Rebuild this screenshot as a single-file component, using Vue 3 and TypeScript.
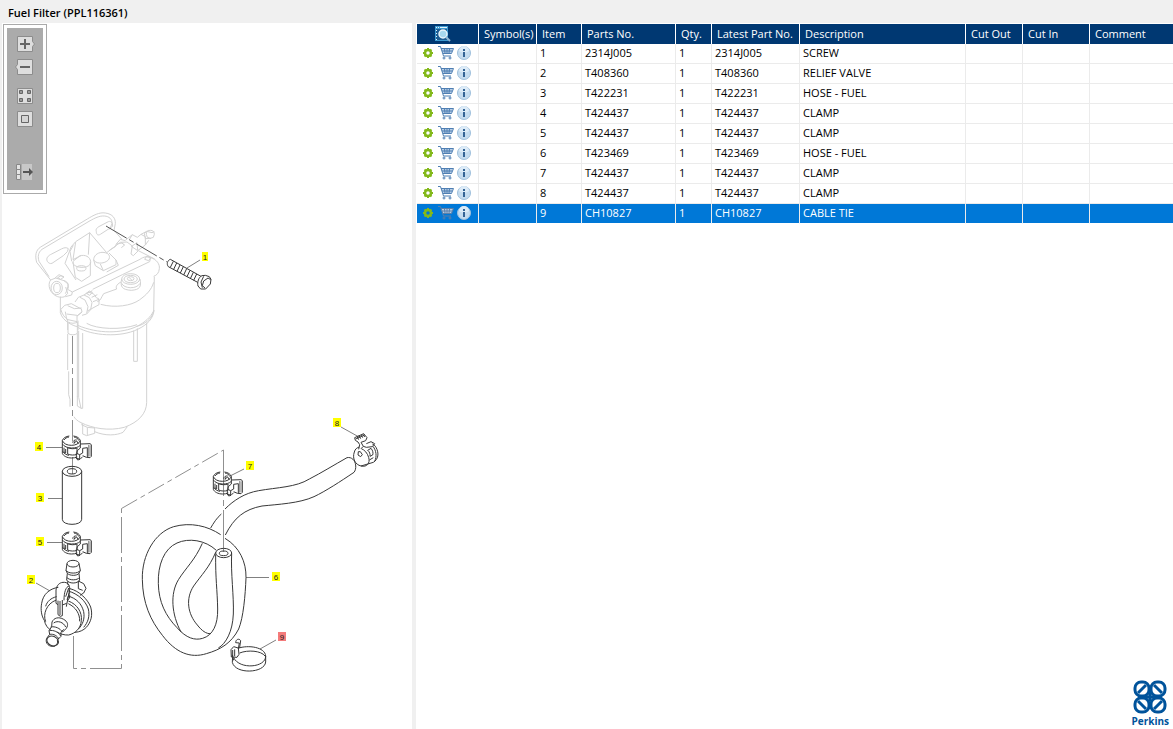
<script setup lang="ts">
import { ref } from 'vue'

interface Part {
  item: number
  partNo: string
  qty: number
  latest: string
  description: string
}

interface Callout {
  item: number
  x: number
  y: number
}

const parts: Part[] = [
  { item: 1, partNo: '2314J005', qty: 1, latest: '2314J005', description: 'SCREW' },
  { item: 2, partNo: 'T408360', qty: 1, latest: 'T408360', description: 'RELIEF VALVE' },
  { item: 3, partNo: 'T422231', qty: 1, latest: 'T422231', description: 'HOSE - FUEL' },
  { item: 4, partNo: 'T424437', qty: 1, latest: 'T424437', description: 'CLAMP' },
  { item: 5, partNo: 'T424437', qty: 1, latest: 'T424437', description: 'CLAMP' },
  { item: 6, partNo: 'T423469', qty: 1, latest: 'T423469', description: 'HOSE - FUEL' },
  { item: 7, partNo: 'T424437', qty: 1, latest: 'T424437', description: 'CLAMP' },
  { item: 8, partNo: 'T424437', qty: 1, latest: 'T424437', description: 'CLAMP' },
  { item: 9, partNo: 'CH10827', qty: 1, latest: 'CH10827', description: 'CABLE TIE' },
]

const callouts: Callout[] = [
  { item: 1, x: 202, y: 252 },
  { item: 2, x: 27, y: 575 },
  { item: 3, x: 36, y: 493 },
  { item: 4, x: 35, y: 442 },
  { item: 5, x: 36, y: 537 },
  { item: 6, x: 272, y: 572 },
  { item: 7, x: 246, y: 461 },
  { item: 8, x: 333, y: 418 },
  { item: 9, x: 278, y: 632 },
]

const headings = ['Symbol(s)', 'Item', 'Parts No.', 'Qty.', 'Latest Part No.', 'Description', 'Cut Out', 'Cut In', 'Comment']
const selected = ref(9)
</script>

<template>
  <div class="app">
    <h1 class="title">Fuel Filter (PPL116361)</h1>
    <main class="panes">
      <section class="drawing" aria-label="Drawing">
        <div class="toolbar" role="toolbar" aria-label="Zoom">
          <div class="tools">
            <button class="tool" type="button" aria-label="Zoom in">
              <svg viewBox="0 0 18 16"><path class="key" d="M.5.5h15v5l2 2.5-2 2.5v5H.5z" /><path class="mark" d="M8 3v10M3 8h10" /></svg>
            </button>
            <button class="tool" type="button" aria-label="Zoom out">
              <svg viewBox="0 0 18 16"><path class="key" d="M.5.5h15v15H.5v-5L-1.5 8l2-2.500z" /><path class="mark" d="M3 8h10" /></svg>
            </button>
            <button class="tool tool-gap" type="button" aria-label="Fit page">
              <svg viewBox="0 0 18 16">
                <path class="key" d="M.5.5h15v15H.5z" />
                <path class="box" d="M2.500 2.500h3v3h-3zM10.500 2.500h3v3h-3zM2.500 10.500h3v3h-3zM10.500 10.500h3v3h-3z" />
              </svg>
            </button>
            <button class="tool" type="button" aria-label="Actual size">
              <svg viewBox="0 0 18 16"><path class="key" d="M.5.5h15v15H.5z" /><path class="frame" d="M4.500 4.500h7v7h-7z" /></svg>
            </button>
            <button class="tool tool-last" type="button" aria-label="Hide list">
              <svg viewBox="0 0 18 16">
                <path class="panel" d="M5 0h10v16H5z" />
                <path class="cells" d="M-.5.5h4v5h-4zM-.5 5.500h4v5h-4zM-.5 10.500h4v5h-4z" />
                <path class="arrow" d="M6 7h6V4l4 4-4 4V9H6z" />
              </svg>
            </button>
          </div>
        </div>

        <svg class="diagram" viewBox="2 194 410 535" role="img" aria-label="Fuel filter exploded view">
          <defs>
            <symbol id="clamp" viewBox="0 0 90 78" overflow="visible">
              <path d="M1 14C3 6 12 1 22 0M34 0C44 1 53 6 55 14M1 14v38c3 8 14 14 28 14 6 0 12-1 17-3" />
              <path d="M1 14c4 9 14 14 27 14s23-5 27-14v10M1 24c5 7 15 12 28 12 11 0 20-2 26-8M6 12c3-5 8-8 15-9M36 3c7 1 12 5 15 11" />
              <path d="M17 35v19c8 4 20 4 28 1V36c-8 3-20 3-28-1M6 35v13l5 3V39M2 46c4 7 12 11 19 12" />
              <path d="M32 20c1-6 6-9 12-8M36 21l8-6 5 8M38 16l-2 7M55 24l30-1 3 4v34l-4 4-11-1-11-5" />
              <path d="M55 24v12l-9 8-2 8 9 4 9-5V37l14-2v28M53 56v13l-10-2V52M43 66l4 6 7-2 8-8" />
              <path class="tone" d="M80 27v35M84 28v33" />
            </symbol>
          </defs>

          <!-- filter head -->
          <svg class="ghost" x="20" y="200" width="200" height="130" viewBox="0 0 600 390">
            <path d="M92 240L50 187c-5-18-4-36 12-46L202 57c18-11 36-21 54-18 22 3 31 16 30 32l-4 20 23 26" />
            <path d="M87 230L57 184c-4-13-3-27 9-36L207 64c18-10 31-17 46-16 15 1 24 10 23 23l-7 17" />
            <path d="M82 184c-5-9 2-17 13-22l29-15c8-4 15-6 21-1l-3 9-12 12-34 23c-6 2-11-1-14-6zM229 95c-3-8 3-13 11-17l25-13c5-2 9 0 12 5l1 9-37 24c-7 4-12 1-12-8z" />
            <path d="M135 190l18-49 14-16 42-27 51 60M135 190l33 50M155 184l-5-30 10-18M167 126l-8 53 25-13M209 98l-4 66" />
            <path d="M159 184c-3 10 9 17 24 18 18 1 30-6 29-17-1-14-17-23-33-17zM159 186l7 46 19 12 26-17v-42" />
            <ellipse cx="184" cy="205" rx="14" ry="8" />
            <path d="M221 180c0-12 10-22 25-23 17 0 26 8 21 20-6 12-36 19-46 3zM221 180l5 17 24 15 38-18v-14l-21-21M250 212l-9-20M288 180l7 16-35 20" />
            <path d="M92 240c-8 10-5 28 4 38 9 11 24 17 38 12l9-10-6-19M92 240l15-6 25 8 12 10c0 10-3 20-8 29M105 234l12-10 15 7" />
            <ellipse cx="110" cy="264" rx="17" ry="20" /><ellipse cx="111" cy="264" rx="10" ry="14" />
            <path d="M113 233l10-6 9 4-10 7zM132 242c15 4 15 17 11 26l14 8 203-98c8-7 28-12 32-5l-3 12-82 39-89 44M157 276l-2 9-19 5M392 173c18 5 28 20 26 33-1 13-8 20-17 23M374 178l5-8 13 3-6 9z" />
            <path d="M260 158l41-31 20-1 16 12-4 24 7 5 15-15 49 25M289 132l12-14 15 4M269 150l17-10 3-8 17-3 8 6-10 8M305 128l6 6M316 121l21-17 15 8 11-9 13 7v25l-23 17-19-13M335 139l16-11 2 22M337 104l-9 15M363 103l17-9 16 4 7-3M376 135l10-14" />
            <ellipse cx="391" cy="103" rx="12" ry="12" /><path d="M386 91l-13 9 3 16 17-1" />
            <ellipse cx="332" cy="237" rx="27" ry="16" /><ellipse cx="332" cy="237" rx="20" ry="11" /><ellipse cx="332" cy="236" rx="10" ry="6" />
            <path d="M305 237c-5 24 1 32 29 34 25-2 31-10 26-34M305 250c6 16 45 19 55 0M327 232l8 8M303 246c-8 4-18 12-13 21l-39 14c-8 12-9 22-19 24M242 313c44 12 92 4 116-13 22-16 36-30 43-53" />
            <path d="M121 290v48c7 27 42 41 52 42M403 230l-2 106c-8 22-25 36-50 43" />
            <path d="M121 330l13-14 20-5 30 16 2 9-15 12v17l-31-7-4-23M140 342l31 4M171 348l15-12M143 317l20 9 22-2M165 306l10-14 17-7 16 8 8 14-4 22-12 13-14 4M180 292l15 8 9 20-4 20M192 285l13-9 15 5 9 12 8 4v17l-35 19M197 282l20-10M215 292l17-8M219 305l18-7M199 280l9-7 9 4-8 9z" />
            <path d="M143 358v32M174 362v28M200 370c30 18 105 21 151 4" />
          </svg>

          <!-- filter bowl -->
          <svg class="ghost" x="20" y="310" width="200" height="150" viewBox="0 0 600 450">
            <path d="M123 0c3 13 12 24 20 28M173 52c44 26 128 31 180 6 29-14 47-32 49-58M173 46c61 26 132 25 178 3 24-12 41-28 49-45" />
            <path d="M144 36v34c7 6 22 6 28 0V36M146 36c5 5 20 5 26 0M143 72v108M146 184v70l4 14v22M380 38v240c-1 32-23 58-67 74-47 12-96 3-130-14-11-5-18-12-21-18M172 70v190M176 62v200l7 33h5V69M172 258v30l12 7M341 62v92h11V55" />
            <path d="M188 343v29l12 5 24-7V354M184 344l18 8 22 2M202 352v24M224 365c33 14 67 11 85 2l13-17M186 340l2 6" />
          </svg>

          <!-- centre and assembly lines -->
          <g class="axis">
            <path stroke-dasharray="28 4 6 4" d="M72.500 336V441M72.500 457V474" />
            <path stroke-dasharray="36 4 5 4" d="M73.500 636V668.500H121.500V508.500" />
            <path stroke-dasharray="18 4 5 4" d="M121.500 508.500L223.500 450" />
            <path stroke-dasharray="46 4 6 4" d="M223.500 450V552" />
          </g>
          <path class="screw-axis" stroke-dasharray="24 3 5 3" d="M106 226L167 262" />
          <path class="leader" d="M187 268L200 260M36 583L50 591M48 498.500H62M46 447.500H62M47 542.500H62M246 577.500H269M230 476L244 469M341 427L359 437M260 649L276 640" />

          <!-- screw -->
          <svg class="ink" x="20" y="200" width="200" height="130" viewBox="0 0 600 390">
            <path d="M451 178c-9 3-12 15-6 22l88 47M451 178l92 51M460 184l-9 18M470 189l-9 19M480 195l-9 19M490 200l-9 19M500 206l-9 19M510 211l-9 19M520 217l-9 19M530 222l-9 19" />
            <path d="M546 227c-10 4-15 20-12 31l8 9h15l14-15 2-14-5-8-12-4zM551 229l-8 17 4 17M551 243l13-9 8 5M551 243l-4 14 8 7" />
          </svg>

          <!-- hose 3 -->
          <svg class="ink" x="20" y="430" width="110" height="130" viewBox="0 0 330 390">
            <ellipse cx="156" cy="124" rx="29" ry="15" /><ellipse cx="156" cy="124" rx="14" ry="8" />
            <path d="M127 124v144c0 20 58 20 58 0V124" />
          </svg>

          <use class="ink" href="#clamp" x="62" y="436" width="30" height="26" />
          <use class="ink" href="#clamp" x="62" y="532" width="30" height="26" />
          <use class="ink" href="#clamp" x="213" y="472" width="30" height="26" />

          <!-- relief valve -->
          <svg class="ink" x="20" y="550" width="130" height="130" viewBox="0 0 390 390">
            <ellipse cx="159" cy="41" rx="18" ry="10" />
            <path d="M141 41l-3 20 4 9-2 20c6 12 33 12 39 0l-2-20 4-9-4-20M138 61c6 11 37 11 43 0M140 82c8 10 32 10 39 0M142 70c7 8 29 8 35 0M143 94v10M175 93l16 8 7 14-7 14-11 7M175 93v23l13 5" />
            <path d="M115 112c-27 4-46 21-50 48-4 20 0 39 8 51M150 116c28 7 53 32 62 55 7 25 1 45-13 61-9 9-20 14-34 15M145 123c29 9 51 28 60 54 5 22-1 40-14 55" />
            <path d="M77 215c-9-22 2-54 32-65M145 153c27 10 42 34 39 59-2 24-18 38-38 43-14 1-27-4-35-9M73 211c3 14 10 24 19 29M110 140c-17 4-29 14-33 29M144 138c25 7 41 23 47 47 4 21-3 40-16 52M145 161c23 11 35 31 34 53" />
            <path d="M108 160v-40c2-13 9-22 21-23 14-1 21 7 20 22l-8 40-2 11M132 151c0-25 6-41 15-43M137 140l9-26 3 13-8 22M114 152v42l7 5 6-2v-47M120 153v42M108 160l6 4M127 165l13-5M141 151c6 0 9-10 8-17" />
            <path d="M96 216c5-12 20-17 35-8 12 7 15 16 8 27l-12 12M96 216l-1 14-8 12 2 11-9 12c-6 15 8 28 25 23l8-9-1-9 11-11v-12l8-9M92 231c13-3 29 4 35 15M88 242c12-3 28 4 34 16M89 253c12-2 24 5 27 14M101 219c12-9 30-2 36 12" />
            <ellipse cx="98" cy="273" rx="18" ry="14" transform="rotate(25 98 273)" />
          </svg>

          <!-- hose 6 and cable tie -->
          <svg class="ink" x="130" y="500" width="170" height="190" viewBox="0 0 510 570">
            <path d="M272 104C232 77 181 66 131 80 75 97 35 165 37 238c1 71 24 123 61 169 39 51 83 69 131 54 42-12 75-31 97-74 14-34 20-101 22-154 1-46-19-92-63-118" />
            <path d="M259 151C226 120 176 113 141 129c-39 17-58 66-56 122 1 55 22 97 56 132 28 32 54 39 77 32 31-9 46-42 45-88-1-57-7-92-6-164M217 130c-22 50-49 73-71 108-27 43-21 106 7 158M257 157c-20 47-42 67-66 101-25 38-18 84 11 117 13 17 27 27 40 26M305 160c-3 61 7 128 5 182-2 52-22 89-45 102" />
            <ellipse cx="281" cy="159" rx="24" ry="14" /><ellipse cx="281" cy="160" rx="13" ry="7" />
            <path d="M324 445c30-11 81-4 83 23 1 35-78 42-96 5M407 468v18c-3 34-91 38-100 1l1-21M329 459c24-10 65-7 76 9" />
            <path d="M303 449l8-9 14 4 2 19-6 9-17-1zM308 450v19M314 448v21M317 428c0-10 10-14 15-6l-3 20-4 4M325 446l3-17-11-1M307 465l4 16" />
          </svg>

          <!-- upper hose and clamp 8 -->
          <svg class="ink" x="200" y="410" width="200" height="120" viewBox="0 0 600 360">
            <path d="M441 143c-39 22-76 45-113 64-40 25-96 25-152 35-42 7-75 29-101 55M64 312c-14 12-24 28-32 42M76 375c26-52 57-77 110-87 48-5 112-8 156-28 34-16 80-46 120-73" />
            <path d="M441 143c14-3 24 8 26 22 1 10-1 17-5 22" />
            <path d="M463 126c-7 20 3 38 20 42 18 4 28-8 23-26-4-13-12-22-22-26M463 126c2-9 8-13 15-15M483 168l37-11c15-9 18-27 8-45-3-5-7-9-11-10M519 109c10 13 12 30 5 45M503 121l10-6c6 7 7 14 5 20l-8 4c1-7-1-13-7-18M475 125l-1 10 8 5 5-6-6-9zM508 150l12-7" />
            <path d="M466 91l-2-8 27-12 10 12-4 9-14 5 7 12 9 3 18-2 7-9-11-6-14 6M466 91l8 5 5 8-3 14M467 87l27-12M471 80l5 9M477 77l5 9M483 75l5 8M489 73l5 8M490 109l-7 7" />
          </svg>

          <g v-for="c in callouts" :key="c.item" class="callout" :class="{ active: c.item === selected }" @click="selected = c.item">
            <rect :x="c.x" :y="c.y" :width="c.item === 1 ? 6 : 8" height="9" />
            <text :x="c.item === 1 ? c.x + 3 : c.x + 4" :y="c.y + 8">{{ c.item }}</text>
          </g>
        </svg>
      </section>

      <section class="list" aria-label="Parts list">
        <table class="parts">
          <colgroup>
            <col class="w-tools" /><col class="w-symbols" /><col class="w-item" /><col class="w-part" /><col class="w-qty" />
            <col class="w-latest" /><col class="w-desc" /><col class="w-out" /><col class="w-in" /><col />
          </colgroup>
          <thead>
            <tr>
              <th class="search" scope="col" aria-label="Actions">
                <svg viewBox="0 0 16 16">
                  <path fill="#3d9ad1" d="M0 0h13v15H0z" /><path fill="#1d5c92" d="M1 3h11v11H1z" />
                  <path fill="#e5f3fa" d="M1 1h1v1H1zM3 1h1v1H3zM5 1h7v1H5zM1 4h1v1H1zM1 7h1v1H1zM1 10h1v1H1zM1 13h1v1H1z" />
                  <circle cx="8" cy="8" r="4" fill="#a8d8ee" stroke="#e9f4fa" stroke-width="1.500" />
                  <path d="M11 11l4 4" stroke="#8fb4d0" stroke-width="2" />
                </svg>
              </th>
              <th v-for="h in headings" :key="h" scope="col">{{ h }}</th>
            </tr>
          </thead>
          <tbody>
            <tr v-for="p in parts" :key="p.item" :class="{ selected: p.item === selected }" @click="selected = p.item">
              <td>
                <div class="actions">
                  <button class="action" type="button" aria-label="Options">
                    <svg viewBox="0 0 16 16">
                      <circle cx="8" cy="8" r="3" fill="none" stroke="#83b81a" stroke-width="2.500" />
                      <path d="M8 3v1M8 12v1M3 8h1M12 8h1M4.500 4.500l1 1M10.500 10.500l1 1M4.500 11.500l1-1M10.500 5.500l1-1" stroke="#83b81a" stroke-width="2" />
                    </svg>
                  </button>
                  <button class="action" type="button" aria-label="Add to cart">
                    <svg class="cart" viewBox="0 0 16 16">
                      <path d="M3 4h12l-2 5H5z" fill="#b7cee6" stroke="none" />
                      <path d="M0 1.500h2.500l3 9.500H13M3 3.500h12.500L13.500 8.500H5M6.500 4l.5 4M9 4v4M11.500 4L11 8M4 6h10" />
                      <circle cx="6" cy="13" r="1" /><circle cx="12" cy="13" r="1" />
                    </svg>
                  </button>
                  <button class="action" type="button" aria-label="Information">
                    <svg viewBox="0 0 16 16">
                      <circle cx="8" cy="8" r="6.500" fill="#c5dcef" stroke="#9fc0dc" />
                      <path d="M3 6a5 5 0 0 1 10 0c-3 2-7 2-10 0z" fill="#dcebf7" />
                      <path d="M7 4h2v2H7zM7 7h2v5H7z" fill="#346394" />
                    </svg>
                  </button>
                </div>
              </td>
              <td></td>
              <td>{{ p.item }}</td>
              <td>{{ p.partNo }}</td>
              <td>{{ p.qty }}</td>
              <td>{{ p.latest }}</td>
              <td>{{ p.description }}</td>
              <td></td>
              <td></td>
              <td></td>
            </tr>
          </tbody>
        </table>

        <div class="brand">
          <svg viewBox="0 0 34 34" aria-hidden="true">
            <g fill="none" stroke="#00539b" stroke-width="3">
              <rect x="2" y="2" width="14" height="14" rx="6" /><rect x="18" y="2" width="14" height="14" rx="6" />
              <rect x="2" y="18" width="14" height="14" rx="6" /><rect x="18" y="18" width="14" height="14" rx="6" />
              <path d="M5 13l8-8M29 13l-8-8M5 21l8 8M29 21l-8 8M13 17h8M17 13v8" />
            </g>
          </svg>
          <span>Perkins</span>
        </div>
      </section>
    </main>
  </div>
</template>

<style>
body {
  margin: 0;
  background: #f0f0f0;
}
</style>

<style scoped>
.app {
  display: flex;
  flex-direction: column;
  box-sizing: border-box;
  min-height: 100vh;
  padding-left: 2px;
  background: #f0f0f0;
  color: #000;
  font: 11px/16px "Open Sans", "Noto Sans", sans-serif;
}
.title {
  margin: 0;
  padding: 5px 6px 2px;
  font-size: 11px;
  line-height: 16px;
  font-weight: 600;
}
.panes {
  flex: 1;
  display: grid;
  grid-template-columns: minmax(0, 410fr) minmax(0, 757fr);
  gap: 4px;
}
.drawing {
  background: #fff;
}
.toolbar {
  box-sizing: border-box;
  width: 44px;
  margin: 1px 0 0 1px;
  padding: 3px;
  border: 1px solid #aaa;
}
.tools {
  display: flex;
  flex-direction: column;
  gap: 7px;
  padding: 8px 10px 10px;
  background: #ababab;
}
.tool {
  height: 16px;
  padding: 0;
  border: 0;
  background: none;
}
.tool svg {
  display: block;
  width: 18px;
  height: 16px;
  overflow: visible;
}
.tool-gap {
  margin-top: 6px;
}
.tool-last {
  margin-top: 30px;
}
.key {
  fill: #dedede;
  stroke: #8c8c8c;
}
.mark {
  stroke: #666;
  stroke-width: 2;
}
.box {
  fill: #999;
  stroke: #666;
}
.frame {
  fill: #d4d4d4;
  stroke: #666;
}
.panel {
  fill: #c8c8c8;
}
.cells {
  fill: #e4e4e4;
  stroke: #888;
}
.arrow {
  fill: #555;
}
.diagram {
  display: block;
  width: 100%;
}
.ghost,
.ink,
.axis,
.screw-axis,
.leader {
  fill: none;
  overflow: visible;
}
.ghost {
  stroke: #d2d2d2;
  stroke-width: 3;
}
.ink {
  stroke: #383838;
  stroke-width: 3;
  stroke-linejoin: round;
}
.tone {
  stroke: #888;
}
.axis {
  stroke: #909090;
}
.screw-axis {
  stroke: #555;
}
.leader {
  stroke: #808080;
}
.callout {
  cursor: pointer;
}
.callout rect {
  fill: #ff0;
}
.callout.active rect {
  fill: #f47b7b;
}
.callout text {
  fill: #222;
  font: 8px "Liberation Sans", sans-serif;
  text-anchor: middle;
}
.list {
  display: flex;
  flex-direction: column;
  background: #fff;
  padding: 1px 0 0 1px;
}
.parts {
  width: 100%;
  table-layout: fixed;
  border-collapse: separate;
  border-spacing: 0;
}
.w-tools { width: 62px; }
.w-symbols { width: 58px; }
.w-item { width: 45px; }
.w-part { width: 94px; }
.w-qty { width: 36px; }
.w-latest { width: 88px; }
.w-desc { width: 166px; }
.w-out { width: 57px; }
.w-in { width: 67px; }
.parts th,
.parts td {
  box-sizing: border-box;
  height: 20px;
  overflow: hidden;
  text-align: left;
  white-space: nowrap;
  font-weight: 400;
}
.parts th {
  padding: 0 0 0 5px;
  border-right: 1px solid #fff;
  background: #003872;
  color: #fff;
}
.parts td {
  padding: 0 3px 2px;
  border-right: 1px solid #ebebeb;
  border-bottom: 1px solid #ebebeb;
}
.parts tr > :last-child {
  border-right: 0;
}
.parts .search {
  padding: 0 0 0 18px;
}
.search svg {
  display: block;
  width: 16px;
  height: 16px;
}
.parts .selected td {
  background: #0078d7;
  border-bottom-color: #fff;
  color: #fff;
}
.actions {
  display: flex;
  gap: 2px;
}
.action {
  width: 16px;
  height: 16px;
  padding: 0;
  border: 0;
  background: none;
}
.action svg {
  display: block;
  width: 16px;
  height: 16px;
}
.cart {
  fill: none;
  stroke: #4f7fb3;
}
.selected .cart {
  stroke: #5b7fa8;
}
.brand {
  display: flex;
  flex-direction: column;
  align-items: center;
  align-self: flex-end;
  margin: auto 4px 1px 0;
  color: #00539b;
  font: 700 10px/14px "Open Sans", sans-serif;
}
.brand svg {
  width: 34px;
  height: 34px;
}
</style>
